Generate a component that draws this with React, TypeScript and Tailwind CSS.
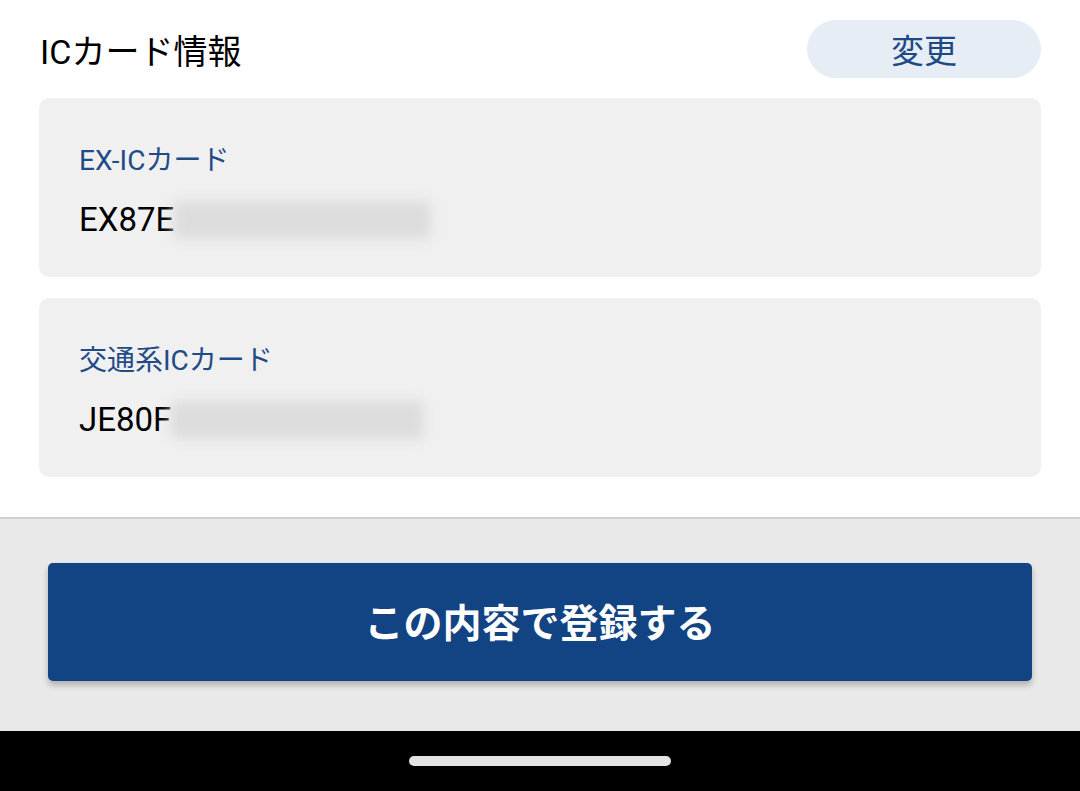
const font = { fontFamily: '"Roboto", "Noto Sans CJK JP", sans-serif' };

function CardInfo({ label, prefix, blurWidth }: { label: string; prefix: string; blurWidth: string }) {
  return (
    <div className="h-[179px] rounded-[10px] bg-[#f0f0f0] px-10 pt-[41px]">
      <div className="text-[28px] leading-[44px] text-[#1f4b87]">{label}</div>
      <div className="mt-[15px] flex items-center">
        <span className="text-[33px] leading-[44px] text-black">{prefix}</span>
        <div className={`h-[38px] ${blurWidth} bg-[#dcdcdc] blur-[6px]`} />
      </div>
    </div>
  );
}

export default function App() {
  return (
    <div className="flex h-[791px] w-[1080px] flex-col overflow-hidden bg-white" style={font}>
      {/* top content */}
      <div className="flex flex-1 flex-col px-[39px] pt-[20px]">
        <div className="flex items-center justify-between">
          <h1 className="pl-[1px] pt-[6px] text-[34px] font-normal text-black">ICカード情報</h1>
          <button className="h-[58px] w-[234px] rounded-full bg-[#e6edf5] pt-[5px] text-[33px] text-[#1d4a86]">
            変更
          </button>
        </div>
        <div className="mt-[20px] flex flex-col gap-[21px]">
          <CardInfo label="EX-ICカード" prefix="EX87E" blurWidth="w-[256px]" />
          <CardInfo label="交通系ICカード" prefix="JE80F" blurWidth="w-[252px]" />
        </div>
      </div>

      {/* bottom action area */}
      <div className="h-[214px] border-t-2 border-[#cfcfcf] bg-[#e9e9e9] px-[48px] pt-[44px]">
        <button className="h-[118px] w-full rounded-[5px] bg-[#124383] pt-[5px] text-[39px] font-bold text-white shadow-[0_4px_6px_rgba(0,0,0,0.25)]">
          この内容で登録する
        </button>
      </div>

      {/* system nav bar */}
      <div className="flex h-[60px] items-center justify-center bg-black">
        <div className="h-[10px] w-[262px] rounded-full bg-[#e3e3e3]" />
      </div>
    </div>
  );
}
